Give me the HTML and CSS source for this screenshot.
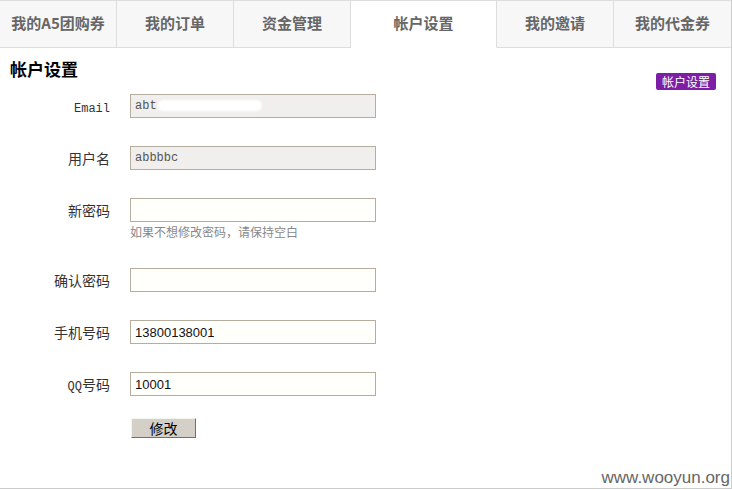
FILE: index.html
```html
<!DOCTYPE html>
<html lang="zh-CN">
<head>
    <meta charset="UTF-8">
    <title>帐户设置</title>
    <link rel="stylesheet" href="styles.css">
</head>
<body>
    <div class="panel">
        <ul class="tabs">
            <li class="tab t1">我的A5团购券</li>
            <li class="tab">我的订单</li>
            <li class="tab">资金管理</li>
            <li class="tab active">帐户设置</li>
            <li class="tab">我的邀请</li>
            <li class="tab t6">我的代金券</li>
        </ul>

        <div class="head">
            <h2>帐户设置</h2>
            <span class="badge">帐户设置</span>
        </div>

        <div class="form">
            <div class="row">
                <label><span class="mono">Email</span></label>
                <div class="field">
                    <input type="text" class="disabled" value="abt" disabled>
                    <span class="mask"></span>
                </div>
            </div>
            <div class="row">
                <label>用户名</label>
                <div class="field">
                    <input type="text" class="disabled" value="abbbbc" disabled>
                </div>
            </div>
            <div class="row">
                <label>新密码</label>
                <div class="field">
                    <input type="password">
                </div>
            </div>
            <p class="hint">如果不想修改密码，请保持空白</p>
            <div class="row">
                <label>确认密码</label>
                <div class="field">
                    <input type="password">
                </div>
            </div>
            <div class="row">
                <label>手机号码</label>
                <div class="field">
                    <input type="text" value="13800138001">
                </div>
            </div>
            <div class="row">
                <label><span class="mono">QQ</span>号码</label>
                <div class="field">
                    <input type="text" value="10001">
                </div>
            </div>
            <div class="actions">
                <button>修改</button>
            </div>
        </div>

        <span class="watermark">www.wooyun.org</span>
    </div>
</body>
</html>
```

FILE: styles.css
```css
body {
    margin: 0;
    background-color: #fff;
    font-family: "Noto Sans CJK SC", "Liberation Sans", sans-serif;
    color: #333;
}

.panel {
    position: relative;
    width: 731px;
    height: 488px;
    border-right: 1px solid #ccc;
    border-bottom: 1px solid #ccc;
}

.tabs {
    display: flex;
    margin: 0;
    padding: 0;
    list-style: none;
    border-top: 1px solid #ddd;
}

.tab {
    width: 116px;
    height: 46px;
    line-height: 44px;
    text-align: center;
    font-size: 15px;
    font-weight: bold;
    color: #666;
    background-color: #f7f7f7;
    border-right: 1px solid #ddd;
    border-bottom: 1px solid #ddd;
}

.tab.t6 {
    width: 117px;
    border-right: none;
}

.tab.active {
    width: 145px;
    background-color: #fff;
    border-bottom-color: #fff;
}

.head {
    display: flex;
    justify-content: space-between;
    padding: 0 15px 0 10px;
    height: 46px;
}

.head h2 {
    margin: 9px 0 0;
    font-size: 17px;
    color: #000;
    line-height: 24px;
}

.badge {
    margin-top: 25px;
    height: 17px;
    line-height: 17px;
    padding: 0 6px;
    border-radius: 2px;
    background-color: #7d1fa5;
    color: #fff;
    font-size: 12px;
}

.row {
    display: flex;
    height: 24px;
    margin-bottom: 28px;
}

.row label {
    width: 110px;
    margin-right: 20px;
    text-align: right;
    font-size: 14px;
    line-height: 24px;
    color: #333;
}

.mono {
    font-family: "Liberation Mono", monospace;
    font-size: 12px;
}

.field {
    position: relative;
}

input {
    display: block;
    box-sizing: border-box;
    width: 246px;
    height: 24px;
    padding: 0 4px;
    border: 1px solid #b5ae9f;
    background-color: #fffffc;
    font-family: "Liberation Sans", sans-serif;
    font-size: 13px;
    color: #111;
    outline: none;
}

input.disabled {
    background-color: #f0efed;
    font-family: "Liberation Mono", monospace;
    font-size: 12px;
    color: #555;
}

.mask {
    position: absolute;
    left: 28px;
    top: 6px;
    width: 104px;
    height: 11px;
    border-radius: 6px;
    background-color: #fff;
    filter: blur(1px);
}

.hint {
    margin: -27px 0 27px 130px;
    height: 18px;
    line-height: 18px;
    font-size: 12px;
    color: #888;
}

.actions {
    padding-left: 131px;
    margin-top: -6px;
}

button {
    display: block;
    width: 65px;
    height: 20px;
    padding: 0;
    background-color: #d4d0c8;
    border: 1px solid;
    border-color: #f4f4f0 #707070 #707070 #f4f4f0;
    font-family: "Noto Sans CJK SC", sans-serif;
    font-size: 14px;
    line-height: 16px;
    color: #000;
}

.watermark {
    position: absolute;
    right: 1px;
    bottom: 0;
    font-family: "Liberation Sans", sans-serif;
    font-size: 17px;
    line-height: 20px;
    color: #666;
}
```
